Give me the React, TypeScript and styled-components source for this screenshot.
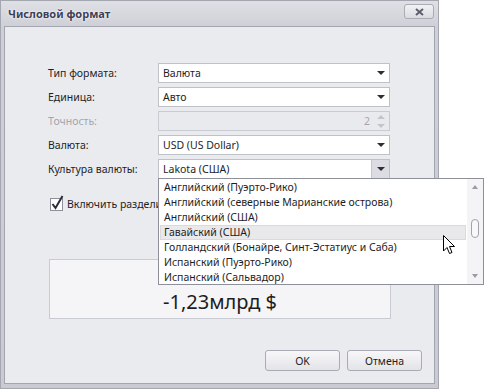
import React from 'react';
import styled, { createGlobalStyle } from 'styled-components';

const GlobalStyle = createGlobalStyle`
  html, body {
    margin: 0;
    padding: 0;
    background: #ffffff;
  }
  body {
    font-family: 'Noto Sans', 'Open Sans', sans-serif;
    font-size: 10.5px;
    color: #1e1e1e;
  }
`;

const Page = styled.div`
  width: 484px;
  height: 389px;
  position: relative;
  overflow: hidden;
`;

const Window = styled.div`
  width: 437px;
  height: 387px;
  border: 1px solid #a4a6b0;
  background: linear-gradient(#dfe0e5, #cfd0d7 26px, #c9cad2);
  display: flex;
  flex-direction: column;
`;

const TitleBar = styled.div`
  height: 25px;
  display: flex;
  align-items: center;
  justify-content: space-between;
  padding: 0 4px 0 7px;
`;

const Title = styled.span`
  font-weight: 700;
  font-size: 11px;
  color: #3c3f56;
  text-shadow: 0 0 3px #ffffff, 0 0 1px #ffffff;
`;

const CloseButton = styled.button`
  width: 30px;
  height: 15px;
  margin-top: -4px;
  border: 1px solid #a9abb5;
  border-radius: 3px;
  background: linear-gradient(#f2f2f5, #dadbe1);
  padding: 0;
  display: flex;
  align-items: center;
  justify-content: center;
`;

const Content = styled.div`
  flex: 1;
  margin: 0 3px 4px 3px;
  border: 1px solid #a3a5af;
  background: #eaebef;
  padding: 36px 0 0 43px;
  display: flex;
  flex-direction: column;
`;

const Form = styled.div`
  display: grid;
  grid-template-columns: 110px 232px;
  grid-auto-rows: 20px;
  row-gap: 4px;
  align-items: center;
`;

const Label = styled.span<{ $disabled?: boolean }>`
  color: ${(p) => (p.$disabled ? '#a4a6ad' : '#1e1e1e')};
`;

const Field = styled.div<{ $disabled?: boolean }>`
  position: relative;
  height: 20px;
  box-sizing: border-box;
  border: 1px solid ${(p) => (p.$disabled ? '#c9cbd2' : '#bfc1c9')};
  background: ${(p) => (p.$disabled ? '#e9eaee' : '#ffffff')};
  display: flex;
  align-items: center;
`;

const FieldText = styled.span<{ $align?: 'right' }>`
  flex: 1;
  padding: 0 4px;
  text-align: ${(p) => p.$align || 'left'};
  white-space: nowrap;
`;

const ArrowBox = styled.div<{ $pressed?: boolean }>`
  width: 17px;
  align-self: stretch;
  display: flex;
  align-items: center;
  justify-content: center;
  background: ${(p) => (p.$pressed ? '#dcdde2' : 'transparent')};
  border-left: 1px solid ${(p) => (p.$pressed ? '#c4c6ce' : 'transparent')};
`;

const DownTriangle = styled.span`
  width: 0;
  height: 0;
  border-left: 4px solid transparent;
  border-right: 4px solid transparent;
  border-top: 4px solid #2e2e34;
`;

const SpinArrows = styled.div`
  width: 17px;
  align-self: stretch;
  display: flex;
  flex-direction: column;
  align-items: center;
  justify-content: center;
  gap: 5px;
`;

const SpinTriangle = styled.span<{ $up?: boolean }>`
  width: 0;
  height: 0;
  border-left: 4px solid transparent;
  border-right: 4px solid transparent;
  ${(p) => (p.$up ? 'border-bottom: 4px solid #c3c5cb;' : 'border-top: 4px solid #c3c5cb;')}
`;

const DisabledValue = styled(FieldText)`
  color: #a4a6ad;
  padding-right: 2px;
`;

const CheckRow = styled.div`
  margin-top: 16px;
  margin-left: 2px;
  display: flex;
  align-items: center;
  gap: 4px;
  height: 18px;
`;

const CheckBox = styled.div`
  position: relative;
  flex: none;
  width: 11px;
  height: 11px;
  border: 1px solid #8d909b;
  background: #ffffff;
`;

const CheckLabel = styled.span`
  width: 91px;
  overflow: hidden;
  white-space: nowrap;
`;

const Preview = styled.div`
  margin-top: 46px;
  margin-left: 1px;
  width: 340px;
  height: 58px;
  border: 1px solid #c9cbd2;
  background: #f5f5f7;
  display: flex;
  align-items: flex-end;
  justify-content: center;
`;

const PreviewValue = styled.span`
  font-size: 20px;
  line-height: 26px;
  margin-bottom: 3px;
  color: #1c1c22;
`;

const Buttons = styled.div`
  margin-top: auto;
  margin-bottom: 12px;
  align-self: flex-end;
  margin-right: 12px;
  display: flex;
  gap: 7px;
`;

const DialogButton = styled.button`
  width: 75px;
  height: 21px;
  border: 1px solid #aaacb5;
  border-radius: 3px;
  background: linear-gradient(#f7f7f9, #e3e4e8);
  font-family: inherit;
  font-size: 10.5px;
  color: #1e1e1e;
  padding: 0;
`;

const DropList = styled.div`
  position: absolute;
  left: -1px;
  top: 18px;
  width: 326px;
  height: 107px;
  box-sizing: border-box;
  border: 1px solid #8e9099;
  background: #ffffff;
  display: flex;
  z-index: 5;
`;

const Items = styled.div`
  flex: 1;
  padding: 1px 1px 0 1px;
  display: flex;
  flex-direction: column;
`;

const Item = styled.div<{ $hot?: boolean }>`
  height: 15px;
  box-sizing: border-box;
  line-height: 13px;
  padding-left: 3px;
  white-space: nowrap;
  color: #1e1e1e;
  background: ${(p) => (p.$hot ? '#e9e9ec' : 'transparent')};
  border: 1px solid ${(p) => (p.$hot ? '#dadadd' : 'transparent')};
`;

const ScrollBar = styled.div`
  width: 16px;
  background: #f4f4f6;
  display: flex;
  flex-direction: column;
  align-items: center;
  justify-content: space-between;
  padding: 6px 0 6px;
`;

const ScrollArrow = styled.span<{ $up?: boolean }>`
  width: 0;
  height: 0;
  border-left: 3px solid transparent;
  border-right: 3px solid transparent;
  ${(p) => (p.$up ? 'border-bottom: 4px solid #9a9ca3;' : 'border-top: 4px solid #9a9ca3;')}
`;

const Thumb = styled.div`
  width: 6px;
  height: 17px;
  border: 1px solid #a2a4ab;
  border-radius: 4px;
  background: #f8f8f9;
  margin-top: 30px;
  margin-bottom: auto;
`;

const Cursor = styled.svg`
  position: absolute;
  left: 284px;
  top: 56px;
`;

const items = [
  'Английский (Пуэрто-Рико)',
  'Английский (северные Марианские острова)',
  'Английский (США)',
  'Гавайский (США)',
  'Голландский (Бонайре, Синт-Эстатиус и Саба)',
  'Испанский (Пуэрто-Рико)',
  'Испанский (Сальвадор)',
];

const ComboField = ({ value }: { value: string }) => (
  <Field>
    <FieldText>{value}</FieldText>
    <ArrowBox>
      <DownTriangle />
    </ArrowBox>
  </Field>
);

const App = () => (
  <Page>
    <GlobalStyle />
    <Window>
      <TitleBar>
        <Title>Числовой формат</Title>
        <CloseButton>
          <svg width="9" height="8" viewBox="0 0 9 8">
            <path d="M1 1 L8 7 M8 1 L1 7" stroke="#5c5e6b" strokeWidth="2" />
          </svg>
        </CloseButton>
      </TitleBar>
      <Content>
        <Form>
          <Label>Тип формата:</Label>
          <ComboField value="Валюта" />
          <Label>Единица:</Label>
          <ComboField value="Авто" />
          <Label $disabled>Точность:</Label>
          <Field $disabled>
            <DisabledValue $align="right">2</DisabledValue>
            <SpinArrows>
              <SpinTriangle $up />
              <SpinTriangle />
            </SpinArrows>
          </Field>
          <Label>Валюта:</Label>
          <ComboField value="USD (US Dollar)" />
          <Label>Культура валюты:</Label>
          <Field>
            <FieldText>Lakota (США)</FieldText>
            <ArrowBox $pressed>
              <DownTriangle />
            </ArrowBox>
            <DropList>
              <Items>
                {items.map((it, i) => (
                  <Item key={it} $hot={i === 3}>
                    {it}
                  </Item>
                ))}
              </Items>
              <ScrollBar>
                <ScrollArrow $up />
                <Thumb />
                <ScrollArrow />
              </ScrollBar>
              <Cursor width="13" height="20" viewBox="0 0 13 20">
                <path
                  d="M0.5 0.5 L0.5 16 L4 12.5 L6.5 18.5 L9 17.5 L6.5 11.5 L11.5 11.5 Z"
                  fill="#ffffff"
                  stroke="#000000"
                  strokeWidth="1"
                  strokeLinejoin="miter"
                />
              </Cursor>
            </DropList>
          </Field>
        </Form>
        <CheckRow>
          <CheckBox>
            <svg
              width="14"
              height="15"
              viewBox="0 0 14 15"
              style={{ position: 'absolute', left: 0, top: -4 }}
            >
              <path d="M1.5 9 L4.5 13 L11.5 1" stroke="#2b2d3a" strokeWidth="2" fill="none" />
            </svg>
          </CheckBox>
          <CheckLabel>Включить разделители групп</CheckLabel>
        </CheckRow>
        <Preview>
          <PreviewValue>-1,23млрд $</PreviewValue>
        </Preview>
        <Buttons>
          <DialogButton>OK</DialogButton>
          <DialogButton>Отмена</DialogButton>
        </Buttons>
      </Content>
    </Window>
  </Page>
);

export default App;
